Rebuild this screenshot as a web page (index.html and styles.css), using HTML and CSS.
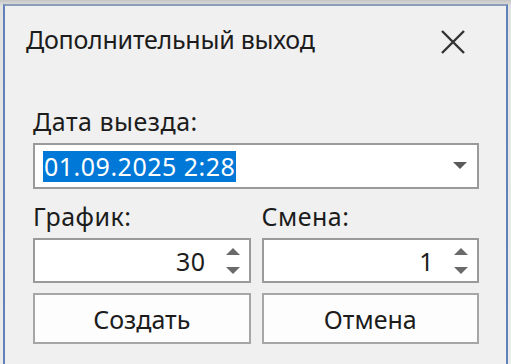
FILE: index.html
```html
<!DOCTYPE html>
<html lang="ru">
<head>
  <meta charset="UTF-8">
  <meta name="viewport" content="width=device-width, initial-scale=1.0">
  <title>Дополнительный выход</title>
  <link rel="stylesheet" href="styles.css">
</head>
<body>
  <div class="window">
    <div class="titlebar">
      <span class="title">Дополнительный выход</span>
      <svg class="close" width="24" height="24" viewBox="0 0 24 24">
        <path d="M1 1 L23 23 M23 1 L1 23" stroke="#333" stroke-width="2.4" fill="none"/>
      </svg>
    </div>

    <div class="content">
      <label class="label">Дата выезда:</label>
      <div class="combo">
        <span class="selected">01.09.2025 2:28</span>
        <svg class="drop" width="14" height="8" viewBox="0 0 14 8">
          <path d="M0 0 H14 L7 7 Z" fill="#5a5a5a"/>
        </svg>
      </div>

      <div class="grid">
        <div class="field">
          <label class="label">График:</label>
          <div class="spin">
            <span class="value">30</span>
            <span class="arrows">
              <svg width="14" height="7" viewBox="0 0 14 7"><path d="M0 7 H14 L7 0 Z" fill="#6a6a6a"/></svg>
              <svg width="14" height="7" viewBox="0 0 14 7"><path d="M0 0 H14 L7 7 Z" fill="#6a6a6a"/></svg>
            </span>
          </div>
        </div>
        <div class="field">
          <label class="label">Смена:</label>
          <div class="spin">
            <span class="value">1</span>
            <span class="arrows">
              <svg width="14" height="7" viewBox="0 0 14 7"><path d="M0 7 H14 L7 0 Z" fill="#6a6a6a"/></svg>
              <svg width="14" height="7" viewBox="0 0 14 7"><path d="M0 0 H14 L7 7 Z" fill="#6a6a6a"/></svg>
            </span>
          </div>
        </div>
        <button type="button" class="btn">Создать</button>
        <button type="button" class="btn">Отмена</button>
      </div>
    </div>
  </div>
</body>
</html>
```

FILE: styles.css
```css
body {
  margin: 0;
  height: 364px;
  overflow: hidden;
  background: linear-gradient(#c4c4c4, #e2e2e2 6px, #ececec);
  font-family: "Noto Sans", "Open Sans", sans-serif;
  font-size: 25px;
  color: #1c1c1c;
}

.window {
  box-sizing: border-box;
  margin: 4px 0 0 3px;
  width: 505px;
  height: 360px;
  background-color: #f0f0f0;
  border: 2px solid #5e82b9;
  border-top-color: #8a9cb8;
  border-bottom: none;
}

.titlebar {
  display: flex;
  align-items: center;
  justify-content: space-between;
  padding: 17px 41px 0 21px;
  height: 32px;
}

.title {
  line-height: 32px;
  letter-spacing: -0.25px;
}

.close {
  display: block;
  margin-top: 5px;
}

.content {
  padding: 50px 27px 0 28px;
  letter-spacing: 0.5px;
}

.label {
  display: block;
  line-height: 32px;
}

.combo {
  display: flex;
  align-items: center;
  justify-content: space-between;
  margin-top: 6px;
  height: 42px;
  padding: 0 10px 0 8px;
  background-color: #fff;
  border: 2px solid #9a9a9a;
}

.selected {
  display: inline-block;
  height: 31px;
  line-height: 31px;
  padding: 0 1px;
  background-color: #0078d7;
  color: #fff;
}

.grid {
  display: grid;
  grid-template-columns: 1fr 1fr;
  column-gap: 11px;
  row-gap: 10px;
  margin-top: 11px;
}

.spin {
  display: flex;
  align-items: center;
  justify-content: flex-end;
  margin-top: 6px;
  height: 41px;
  padding: 0 9px 0 8px;
  background-color: #fff;
  border: 2px solid #9a9a9a;
}

.value {
  line-height: 30px;
  margin-right: 20px;
}

.arrows {
  display: flex;
  flex-direction: column;
  gap: 12px;
}

.arrows svg {
  display: block;
}

.btn {
  height: 51px;
  padding: 0;
  font: inherit;
  color: #1c1c1c;
  background-color: #fdfdfd;
  border: 2px solid #a6a6a6;
}
```
